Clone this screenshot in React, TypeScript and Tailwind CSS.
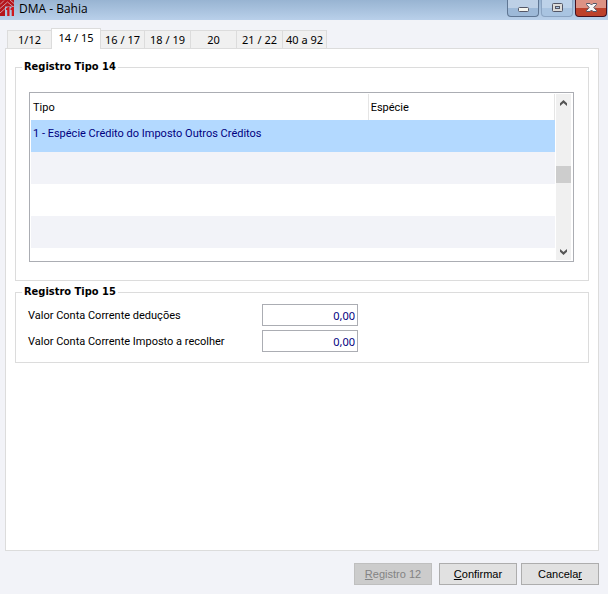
import { useState } from "react";

const tabs = [
  { label: "1/12", width: "w-11" },
  { label: "14 / 15", width: "w-[50px]" },
  { label: "16 / 17", width: "w-11" },
  { label: "18 / 19", width: "w-[46px]" },
  { label: "20", width: "w-[46px]" },
  { label: "21 / 22", width: "w-[46px]" },
  { label: "40 a 92", width: "w-[45px]" },
];

const rows = [
  { tipo: "1 - Espécie Crédito do Imposto Outros Créditos", especie: "" },
  { tipo: "", especie: "" },
  { tipo: "", especie: "" },
  { tipo: "", especie: "" },
];

function Logo() {
  return (
    <svg className="h-4 w-3.5" viewBox="0 0 14 16" aria-hidden="true">
      <path fill="#b5161c" d="M0 0H14V6.500H5V16H0Z" />
      <path fill="none" stroke="#d9b9c4" strokeWidth=".8" d="M0 4.500L4 .5M0 8.500L7.500 2L14 7.500M0 13L5 8.500M10 0L14 3.500" />
      <path fill="#cf171e" d="M6 8.500L8 7H9.500V16H7.200V10H6ZM10.500 8.500L12 7H14V16H11.700V10H10.500Z" />
    </svg>
  );
}

function TitleBar() {
  return (
    <header className="flex h-5 items-start bg-linear-to-b from-[#98b4d2] to-[#b9d0ea]">
      <Logo />
      <h1 className="ml-[5px] flex-1 font-['Open_Sans','Noto_Sans',sans-serif] text-xs leading-[18px] text-black">DMA - Bahia</h1>
      <div className="flex gap-0.5 pr-px">
        <button
          aria-label="Minimizar"
          className="flex h-[17px] w-8 items-center justify-center rounded-b-sm border border-t-0 border-[#5f7693] bg-linear-to-b from-[#bdd0e6] from-50% to-[#9db9d8] to-50%"
        >
          <svg className="mt-0.5 h-[5px] w-[11px]" viewBox="0 0 11 5">
            <rect x=".5" y=".5" width="10" height="4" rx="1" fill="#f5f5ef" stroke="#535666" />
          </svg>
        </button>
        <button
          aria-label="Maximizar"
          className="flex h-[17px] w-8 items-center justify-center rounded-b-sm border border-t-0 border-[#8ba4c2] bg-linear-to-b from-[#bdd2e9] from-50% to-[#a9c4e1] to-50%"
        >
          <svg className="mb-0.5 h-[9px] w-[11px]" viewBox="0 0 11 9">
            <rect x=".5" y=".5" width="10" height="8" rx="1" fill="#dcdcda" stroke="#535666" />
            <rect x="3.5" y="3.5" width="4" height="2" fill="#a9c4e1" stroke="#535666" />
          </svg>
        </button>
        <button
          aria-label="Fechar"
          className="flex h-[17px] w-8 items-center justify-center rounded-b-sm border border-t-0 border-[#43101f] bg-linear-to-b from-[#dd9284] from-50% to-[#bd412b] to-50%"
        >
          <svg className="mb-0.5 h-[9px] w-[11px]" viewBox="0 0 11 9">
            <path
              d="M.5 .5H4L5.500 2L7 .5H10.500V1.500L7.800 4.500L10.500 7.500V8.500H7L5.500 7L4 8.500H.5V7.500L3.200 4.500L.5 1.500Z"
              fill="#f7f5f5"
              stroke="#535666"
            />
          </svg>
        </button>
      </div>
    </header>
  );
}

function ScrollBar() {
  return (
    <div className="flex w-[15px] flex-col justify-between bg-[#f0f0f0]">
      <button aria-label="Rolar para cima" className="flex h-[17px] items-center justify-center">
        <svg className="h-1.5 w-[7px]" viewBox="0 0 7 6">
          <path d="M0 3.200L3.500 0L7 3.200V6L3.500 2.900L0 6Z" fill="#555555" />
        </svg>
      </button>
      <div className="flex flex-1 flex-col">
        <div className="h-[55px]" />
        <div className="h-[17px] bg-[#cdcdcd]" />
      </div>
      <button aria-label="Rolar para baixo" className="flex h-[17px] items-center justify-center">
        <svg className="h-1.5 w-[7px]" viewBox="0 0 7 6">
          <path d="M0 0L3.500 3.100L7 0V2.800L3.500 6L0 2.800Z" fill="#555555" />
        </svg>
      </button>
    </div>
  );
}

function AmountField({ id, label }: { id: string; label: string }) {
  const [value, setValue] = useState("0,00");

  return (
    <div className="flex items-center">
      <label htmlFor={id} className="w-[234px] pt-0.5">{label}</label>
      <input
        id={id}
        type="text"
        value={value}
        onChange={(e) => setValue(e.target.value)}
        className="h-[22px] w-24 border border-[#abadb3] bg-white px-0.5 text-right font-['Noto_Sans',sans-serif] text-[11px] text-[#000080] outline-none"
      />
    </div>
  );
}

export default function App() {
  const [activeTab, setActiveTab] = useState("14 / 15");
  const [selectedRow, setSelectedRow] = useState(0);

  return (
    <div className="flex min-h-screen flex-col bg-[#f2f3f8] font-['Roboto','Noto_Sans',sans-serif] text-[11px] leading-4 text-black">
      <TitleBar />

      <nav role="tablist" className="z-10 mt-2 flex items-end px-[7px] font-['Noto_Sans','Open_Sans',sans-serif]">
        {tabs.map(tab => (
          <button
            key={tab.label}
            role="tab"
            aria-selected={activeTab === tab.label}
            onClick={() => setActiveTab(tab.label)}
            className={`${tab.width} whitespace-nowrap border-t border-l border-[#dcdcdc] last:border-r ${
              activeTab === tab.label ? "z-10 -mr-px -mb-px h-[21px] border-r bg-white pb-0.5" : "h-[18px] bg-[#f0f0f0]"
            }`}
          >
            {tab.label}
          </button>
        ))}
      </nav>

      <main className="mr-[9px] ml-[5px] flex-1 border border-[#dcdcdc] bg-white px-[9px] pt-2.5">
        <fieldset className="border border-[#dcdcdc] pr-3.5 pb-[18px] pl-[13px]">
          <legend className="-ml-[7px] px-0.5 font-['DejaVu_Sans_Condensed','DejaVu_Sans',sans-serif] font-bold">Registro Tipo 14</legend>
          <div className="mt-[17px] flex h-[170px] gap-px overflow-hidden border border-[#abadb3] py-px pr-0.5 pl-px">
            <div className="flex-1 overflow-hidden">
              <table className="w-full table-fixed border-collapse text-left">
                <thead>
                  <tr className="h-[26px]">
                    <th className="w-[64.4%] border-r border-[#e5e5e5] px-0.5 pt-0.5 font-normal">Tipo</th>
                    <th className="border-r border-[#e5e5e5] px-0.5 pt-0.5 font-normal">Espécie</th>
                  </tr>
                </thead>
                <tbody>
                  {rows.map((row, i) => (
                    <tr
                      key={i}
                      onClick={() => setSelectedRow(i)}
                      className={`h-8 ${selectedRow === i ? "bg-[#b3d9ff] text-[#000080]" : i % 2 ? "bg-[#f2f3f8]" : "bg-white"}`}
                    >
                      <td className="px-0.5 pb-1 whitespace-nowrap">{row.tipo}</td>
                      <td className="px-0.5 pb-1">{row.especie}</td>
                    </tr>
                  ))}
                </tbody>
              </table>
            </div>
            <ScrollBar />
          </div>
        </fieldset>

        <fieldset className="mt-[3px] border border-[#dcdcdc] px-3 pb-2.5">
          <legend className="-ml-1.5 px-0.5 font-['DejaVu_Sans_Condensed','DejaVu_Sans',sans-serif] font-bold">Registro Tipo 15</legend>
          <div className="mt-1 flex flex-col gap-1">
            <AmountField id="deducoes" label="Valor Conta Corrente deduções" />
            <AmountField id="recolher" label="Valor Conta Corrente Imposto a recolher" />
          </div>
        </fieldset>
      </main>

      <footer className="mt-3 mr-[9px] mb-[9px] flex justify-end gap-1 font-['Liberation_Sans',Arial,sans-serif]">
        <button disabled className="mr-[3px] h-[22px] w-[78px] border border-[#bfbfbf] bg-[#cccccc] text-[#838383]">
          <span className="underline">R</span>egistro 12
        </button>
        <button className="h-[22px] w-[78px] border border-[#adadad] bg-[#e1e1e1]">
          <span className="underline">C</span>onfirmar
        </button>
        <button className="h-[22px] w-[78px] border border-[#adadad] bg-[#e1e1e1]">
          Cancela<span className="underline">r</span>
        </button>
      </footer>
    </div>
  );
}
